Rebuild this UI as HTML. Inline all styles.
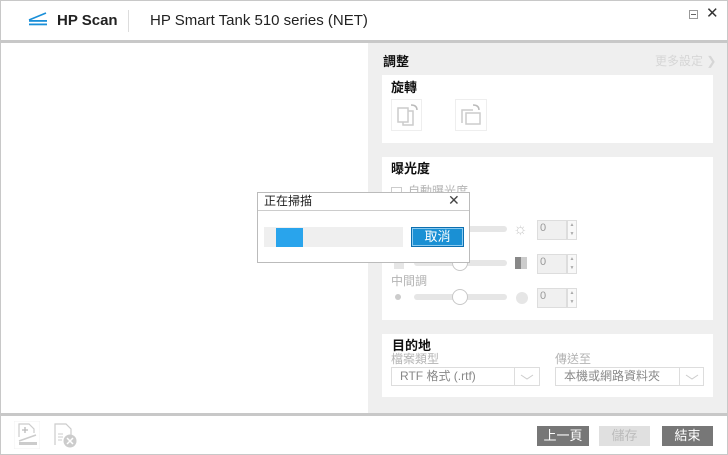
<!DOCTYPE html>
<html><head><meta charset="utf-8"><style>
*{margin:0;padding:0;box-sizing:border-box}
body{width:728px;height:455px;overflow:hidden;background:#fff;font-family:"Liberation Sans","Noto Sans CJK TC",sans-serif;position:relative;line-height:1.2}
.a{position:absolute}
.card{position:absolute;background:#fff;left:382px;width:331px}
.t{font-size:13px;font-weight:bold;color:#111}
.g{color:#b4b4b4;font-size:12px}
.track{position:absolute;height:6px;border-radius:3px;background:#e6e6e6}
.knob{position:absolute;width:16px;height:16px;border-radius:50%;background:#fff;border:1px solid #c8c8c8}
.spin{position:absolute;width:30px;height:20px;border:1px solid #ddd;background:#f0f0f0;font-size:11px;color:#999;padding:1px 2px}
.arr{position:absolute;width:10px;height:20px;border:1px solid #ddd;background:#f8f8f8;font-size:5px;color:#aaa;text-align:center;line-height:9px}
.sel{position:absolute;height:19px;border:1px solid #ddd;background:#fff;font-size:12px;color:#888;padding:1px 8px}
.chev{position:absolute;top:40px}
.btn{position:absolute;height:20px;font-size:13px;color:#fff;text-align:center;line-height:20px}
</style></head><body>
<div class="a" style="left:0;top:0;width:728px;height:455px;border:1px solid #c8c8c8"></div>
<svg class="a" style="left:28px;top:11px" width="22" height="15"><path d="M1 9 L18 2" stroke="#1a8fd8" stroke-width="1.6"/><rect x="1" y="9" width="18" height="1.8" fill="#1a8fd8"/><rect x="1" y="12.5" width="18" height="1.8" fill="#1a8fd8"/></svg>
<div class="a" style="left:57px;top:12px;font-size:15px;font-weight:bold;color:#222">HP Scan</div>
<div class="a" style="left:128px;top:10px;width:1px;height:22px;background:#ddd"></div>
<div class="a" style="left:150px;top:12px;font-size:15px;color:#222">HP Smart Tank 510 series (NET)</div>
<div class="a" style="left:689px;top:10px;width:9px;height:9px;border:1px solid #999"><div style="margin:3px 1px;height:1px;background:#666"></div></div>
<div class="a" style="left:706px;top:5px;font-size:15px;color:#333">✕</div>
<div class="a" style="left:1px;top:40px;width:726px;height:3px;background:#c8c8c8"></div>
<div class="a" style="left:368px;top:43px;width:359px;height:370px;background:#efefef"></div>
<div class="a t" style="left:383px;top:54px">調整</div>
<div class="a" style="left:655px;top:54px;font-size:12px;color:#d6d6d6">更多設定 ❯</div>
<div class="card" style="top:75px;height:68px">
<div class="a t" style="left:9px;top:5px">旋轉</div>
<div class="a" style="left:9px;top:24px;width:31px;height:32px;border:1px solid #eee"></div>
<div class="a" style="left:73px;top:24px;width:32px;height:32px;border:1px solid #eee"></div>
<svg class="a" style="left:13px;top:27px" width="26" height="26"><rect x="3" y="6" width="10" height="14" fill="none" stroke="#ccc" stroke-width="1.5"/><path d="M13 9 H18 V23 H8 V20" fill="none" stroke="#ccc" stroke-width="1.5"/><path d="M16 3 Q22 3 22 8" fill="none" stroke="#bbb" stroke-width="1.5"/></svg>
<svg class="a" style="left:77px;top:27px" width="26" height="26"><path d="M3 21 V8 H14" fill="none" stroke="#ccc" stroke-width="1.5"/><rect x="7" y="11" width="14" height="11" fill="none" stroke="#ccc" stroke-width="1.5"/><path d="M14 3 Q20 3 20 8" fill="none" stroke="#bbb" stroke-width="1.5"/></svg>
</div>
<div class="card" style="top:157px;height:163px">
<div class="a t" style="left:9px;top:4px">曝光度</div>
<div class="a" style="left:9px;top:30px;width:11px;height:11px;border:1px solid #ccc"></div>
<div class="a g" style="left:26px;top:27px">自動曝光度</div>
<div class="track" style="left:32px;top:69px;width:93px"></div>
<div class="a" style="left:131px;top:63px;font-size:16px;color:#ccc">☼</div>
<div class="spin" style="left:155px;top:63px">0</div><div class="arr" style="left:185px;top:63px">▲<br>▼</div>
<div class="a" style="left:12px;top:102px;width:10px;height:10px;background:#e6e6e6"></div>
<div class="track" style="left:32px;top:103px;width:93px"></div>
<div class="knob" style="left:70px;top:98px"></div>
<div class="a" style="left:133px;top:100px;width:12px;height:12px;background:linear-gradient(to right,#888 50%,#ccc 50%)"></div>
<div class="spin" style="left:155px;top:97px">0</div><div class="arr" style="left:185px;top:97px">▲<br>▼</div>
<div class="a g" style="left:9px;top:117px">中間調</div>
<div class="a" style="left:13px;top:137px;width:6px;height:6px;border-radius:50%;background:#ccc"></div>
<div class="track" style="left:32px;top:137px;width:93px"></div>
<div class="knob" style="left:70px;top:132px"></div>
<div class="a" style="left:134px;top:135px;width:12px;height:12px;border-radius:50%;background:#e6e6e6"></div>
<div class="spin" style="left:155px;top:131px">0</div><div class="arr" style="left:185px;top:131px">▲<br>▼</div>
</div>
<div class="card" style="top:334px;height:63px">
<div class="a t" style="left:10px;top:4px">目的地</div>
<div class="a g" style="left:9px;top:18px">檔案類型</div>
<div class="a g" style="left:173px;top:18px">傳送至</div>
<div class="sel" style="left:9px;top:33px;width:149px">RTF 格式 (.rtf)</div>
<div class="a" style="left:132px;top:34px;width:1px;height:17px;background:#ddd"></div>
<svg class="chev" style="left:138px" width="14" height="8"><path d="M1 1 L7 5 L13 1" fill="none" stroke="#ccc"/></svg>
<div class="sel" style="left:173px;top:33px;width:149px">本機或網路資料夾</div>
<div class="a" style="left:297px;top:34px;width:1px;height:17px;background:#ddd"></div>
<svg class="chev" style="left:303px" width="14" height="8"><path d="M1 1 L7 5 L13 1" fill="none" stroke="#ccc"/></svg>
</div>
<div class="a" style="left:1px;top:413px;width:726px;height:3px;background:#c8c8c8"></div>
<svg class="a" style="left:14px;top:421px" width="26" height="28"><rect x="0" y="0" width="26" height="28" fill="none" stroke="#f0f0f0"/><path d="M5 16 V3 H15 L20 8 V12" fill="none" stroke="#ccc" stroke-width="1.2"/><path d="M8 9 H14 M11 6 V12" stroke="#bbb" stroke-width="1.3"/><path d="M5 20 L22 14" stroke="#ccc" stroke-width="1.5"/><rect x="5" y="21" width="18" height="3" fill="#ccc"/></svg>
<svg class="a" style="left:51px;top:421px" width="27" height="28"><path d="M4 24 V3 H15 L20 8 V14" fill="none" stroke="#ccc" stroke-width="1.2"/><path d="M7 13 H12 M7 16 H12 M7 19 H11" stroke="#ccc"/><circle cx="19" cy="20" r="6.5" fill="#ccc"/><path d="M16 17 L22 23 M22 17 L16 23" stroke="#fff" stroke-width="1.5"/></svg>
<div class="btn" style="left:537px;top:426px;width:52px;background:#777">上一頁</div>
<div class="btn" style="left:599px;top:426px;width:51px;background:#e0e0e0;color:#bbb">儲存</div>
<div class="btn" style="left:662px;top:426px;width:51px;background:#777">結束</div>
<div class="a" style="left:257px;top:192px;width:213px;height:71px;background:#fff;border:1px solid #bbb"></div>
<div class="a" style="left:258px;top:210px;width:211px;height:1px;background:#ccc"></div>
<div class="a" style="left:264px;top:194px;font-size:12px;color:#222">正在掃描</div>
<div class="a" style="left:448px;top:192px;font-size:14px;color:#444">✕</div>
<div class="a" style="left:264px;top:227px;width:139px;height:20px;background:#efefef"></div>
<div class="a" style="left:276px;top:228px;width:27px;height:19px;background:#29a4ec"></div>
<div class="a" style="left:411px;top:227px;width:53px;height:20px;background:#1a90d4;border:1px solid #0c6fb0;box-shadow:inset 0 0 0 1px #8ccbf0;color:#fff;font-size:13px;text-align:center;line-height:18px">取消</div>
</body></html>
